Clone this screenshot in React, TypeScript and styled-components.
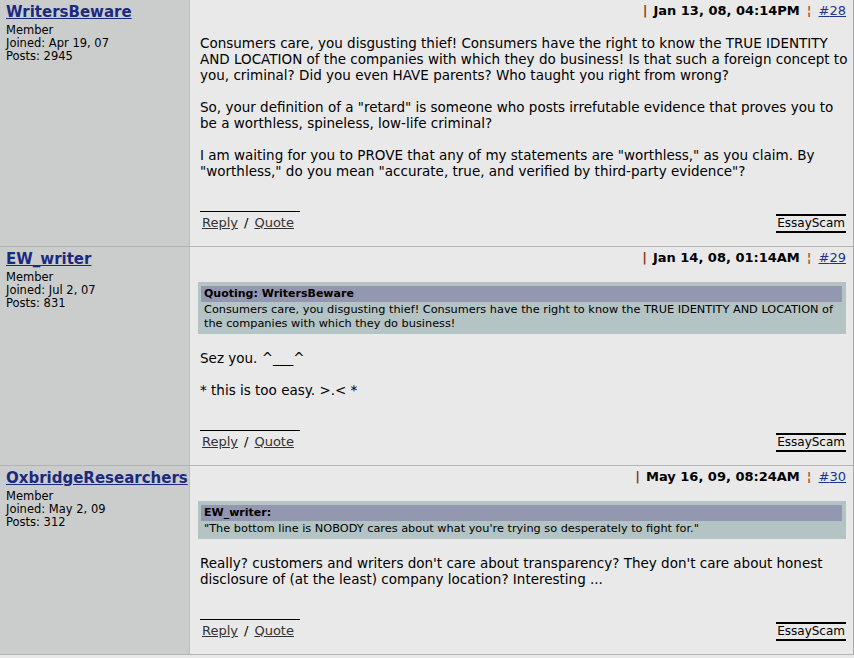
import styled, { createGlobalStyle } from "styled-components";

const GlobalStyle = createGlobalStyle`
  body {
    margin: 0;
    background: #e9e9e9;
    font-family: "DejaVu Sans", Verdana, sans-serif;
    color: #000;
  }
`;

type Quote = { title: string; text: string };

type Post = {
  user: string;
  joined: string;
  posts: string;
  date: string;
  num: number;
  quote?: Quote;
  body: string[];
};

const posts: Post[] = [
  {
    user: "WritersBeware",
    joined: "Apr 19, 07",
    posts: "2945",
    date: "Jan 13, 08, 04:14PM",
    num: 28,
    body: [
      "Consumers care, you disgusting thief! Consumers have the right to know the TRUE IDENTITY AND LOCATION of the companies with which they do business! Is that such a foreign concept to you, criminal? Did you even HAVE parents? Who taught you right from wrong?",
      'So, your definition of a "retard" is someone who posts irrefutable evidence that proves you to be a worthless, spineless, low-life criminal?',
      'I am waiting for you to PROVE that any of my statements are "worthless," as you claim. By "worthless," do you mean "accurate, true, and verified by third-party evidence"?',
    ],
  },
  {
    user: "EW_writer",
    joined: "Jul 2, 07",
    posts: "831",
    date: "Jan 14, 08, 01:14AM",
    num: 29,
    quote: {
      title: "Quoting: WritersBeware",
      text: "Consumers care, you disgusting thief! Consumers have the right to know the TRUE IDENTITY AND LOCATION of the companies with which they do business!",
    },
    body: ["Sez you. ^___^", "* this is too easy. >.< *"],
  },
  {
    user: "OxbridgeResearchers",
    joined: "May 2, 09",
    posts: "312",
    date: "May 16, 09, 08:24AM",
    num: 30,
    quote: {
      title: "EW_writer:",
      text: '"The bottom line is NOBODY cares about what you\'re trying so desperately to fight for."',
    },
    body: [
      "Really? customers and writers don't care about transparency? They don't care about honest disclosure of (at the least) company location? Interesting ...",
    ],
  },
];

const Board = styled.div`
  width: 854px;
  box-sizing: border-box;
  border-right: 1px solid #a8a8a8;
`;

const Row = styled.div`
  display: grid;
  grid-template-columns: 190px 1fr;
  border-bottom: 1px solid #b3b3b3;
`;

const Author = styled.div`
  background: #cbcdcd;
  border-right: 1px solid #bcbcbc;
  padding: 2px 6px;
  font-size: 11.5px;
  line-height: 13px;
`;

const UserName = styled.a`
  display: block;
  font-size: 15px;
  line-height: 21px;
  font-weight: bold;
  color: #1b2a7e;
  text-decoration: underline;
  margin-bottom: 1px;
`;

const Content = styled.div`
  background: #e9e9e9;
  padding: 3px 7px 13px 10px;
  display: flex;
  flex-direction: column;
  font-size: 13px;
  line-height: 16px;
`;

const Header = styled.div`
  display: flex;
  justify-content: flex-end;
  align-items: center;
  margin-bottom: 16px;
`;

const Bar = styled.span<{ $color: string; $gap: number }>`
  color: ${(p) => p.$color};
  font-weight: bold;
  margin: 0 ${(p) => p.$gap}px;
`;

const DateText = styled.span`
  font-weight: bold;
`;

const PostLink = styled.a`
  color: #1f3390;
  text-decoration: underline;
`;

const Body = styled.div`
  font-size: 13.5px;
  margin-right: -7px;
`;

const Para = styled.p`
  margin: 0 0 16px;
  &:last-child {
    margin-bottom: 0;
  }
`;

const QuoteBox = styled.div`
  background: #b4c3c3;
  padding: 4px 4px 3px 3px;
  margin: 0 0 16px -2px;
  line-height: 14px;
`;

const QuoteTitle = styled.div`
  background: #9397b0;
  font-size: 11px;
  font-weight: bold;
  padding: 1px 3px;
  margin-bottom: 1px;
`;

const QuoteText = styled.div`
  font-size: 11.3px;
  padding: 0 3px;
`;

const Footer = styled.div`
  display: flex;
  justify-content: space-between;
  align-items: flex-start;
  margin-top: 32px;
`;

const Actions = styled.div`
  width: 100px;
  border-top: 1px solid #000;
  padding: 3px 0 0 2px;
  box-sizing: border-box;
`;

const Action = styled.a`
  color: #333;
  text-decoration: underline;
`;

const Slash = styled.span`
  margin: 0 6px;
`;

const Site = styled.div`
  margin-top: 3px;
  border-top: 2px solid #000;
  border-bottom: 2px solid #000;
  font-size: 12px;
  line-height: 15px;
  padding: 0 1px;
`;

export default function App() {
  return (
    <>
      <GlobalStyle />
      <Board>
        {posts.map((p) => (
          <Row key={p.num}>
            <Author>
              <UserName href="#">{p.user}</UserName>
              <div>Member</div>
              <div>Joined: {p.joined}</div>
              <div>Posts: {p.posts}</div>
            </Author>
            <Content>
              <Header>
                <Bar $color="#8a3b12" $gap={6}>|</Bar>
                <DateText>{p.date}</DateText>
                <Bar $color="#c0492a" $gap={7}>¦</Bar>
                <PostLink href="#">#{p.num}</PostLink>
              </Header>
              {p.quote && (
                <QuoteBox>
                  <QuoteTitle>{p.quote.title}</QuoteTitle>
                  <QuoteText>{p.quote.text}</QuoteText>
                </QuoteBox>
              )}
              <Body>
                {p.body.map((t, i) => (
                  <Para key={i}>{t}</Para>
                ))}
              </Body>
              <Footer>
                <Actions>
                  <Action href="#">Reply</Action>
                  <Slash>/</Slash>
                  <Action href="#">Quote</Action>
                </Actions>
                <Site>EssayScam</Site>
              </Footer>
            </Content>
          </Row>
        ))}
      </Board>
    </>
  );
}
